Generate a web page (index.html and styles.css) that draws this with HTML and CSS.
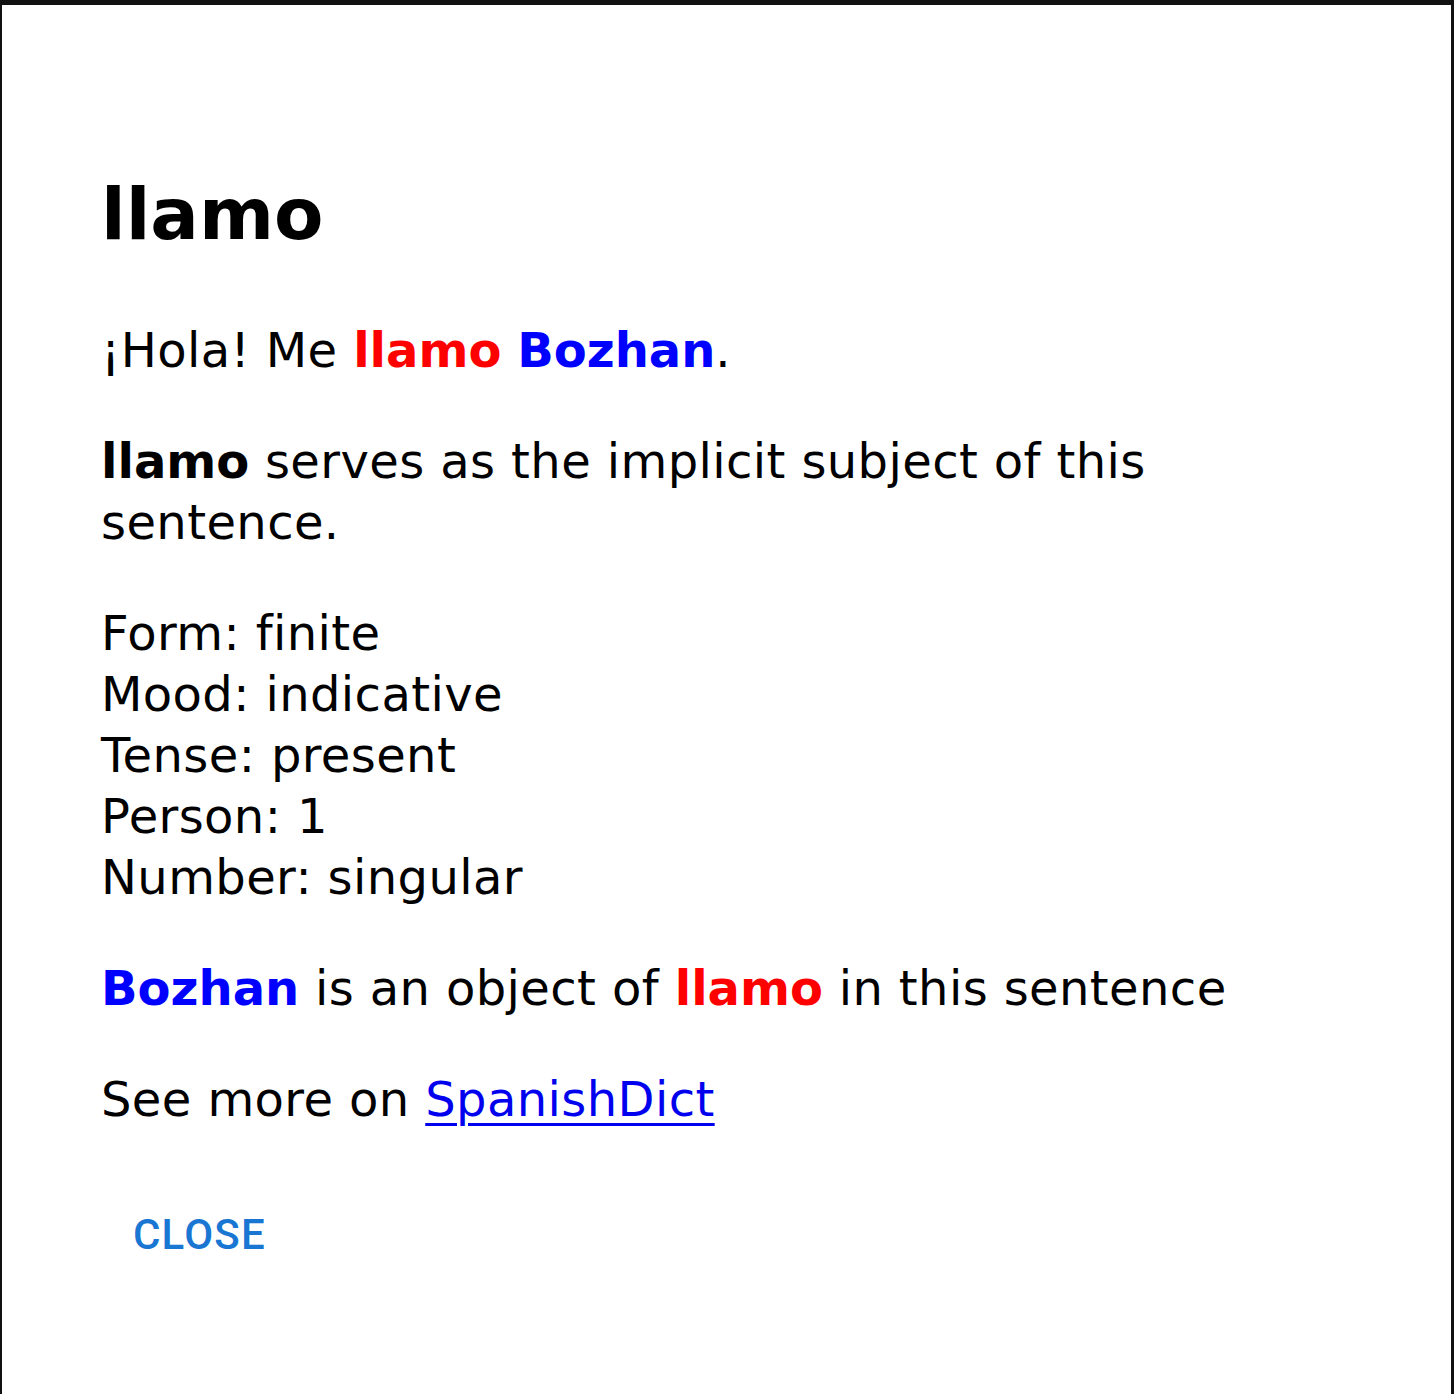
FILE: index.html
```html
<!DOCTYPE html>
<html lang="en">
<head>
<meta charset="utf-8">
<title>llamo</title>
<link rel="stylesheet" href="styles.css">
</head>
<body>
<div class="dialog">
  <div class="content">
    <h1 class="title">llamo</h1>
    <p class="para">¡Hola! Me <b class="red">llamo</b> <b class="blue">Bozhan</b>.</p>
    <p class="para"><b>llamo</b> serves as the implicit subject of this sentence.</p>
    <p class="para">Form: finite<br>Mood: indicative<br>Tense: present<br>Person: 1<br>Number: singular</p>
    <p class="para"><b class="blue">Bozhan</b> is an object of <b class="red">llamo</b> in this sentence</p>
    <p class="para">See more on <a class="link" href="#">SpanishDict</a></p>
  </div>
  <div class="actions">
    <button class="close-btn" type="button">Close</button>
  </div>
</div>
</body>
</html>
```

FILE: styles.css
```css
html, body {
  margin: 0;
  padding: 0;
  background: #ffffff;
}

.dialog {
  box-sizing: border-box;
  width: 1454px;
  min-height: 1394px;
  border-top: 5px solid #111111;
  border-left: 2px solid #111111;
  border-right: 3px solid #111111;
  background: #ffffff;
  font-family: "DejaVu Sans", sans-serif;
  color: #000000;
}

.content {
  padding: 166px 200px 0 99px;
}

.title {
  margin: 0 0 63px 0;
  font-size: 72px;
  line-height: 86px;
  font-weight: bold;
}

.para {
  margin: 0 0 50px 0;
  font-size: 48px;
  line-height: 61px;
  letter-spacing: 0.4px;
}

.para b {
  letter-spacing: 0;
}

.para:last-child {
  margin-bottom: 0;
}

.red {
  color: #ff0000;
}

.blue {
  color: #0000ff;
}

.link {
  color: #0000ee;
  text-decoration: underline;
  text-decoration-thickness: 3px;
  text-underline-offset: 7px;
}

.actions {
  padding: 52px 21px 0 110px;
}

.close-btn {
  border: 0;
  background: transparent;
  font-family: Roboto, "Liberation Sans", sans-serif;
  font-weight: 500;
  font-size: 42px;
  line-height: 1.75;
  letter-spacing: 1.2px;
  text-transform: uppercase;
  color: #1976d2;
  padding: 16px 21px;
  margin: 0;
}
```
